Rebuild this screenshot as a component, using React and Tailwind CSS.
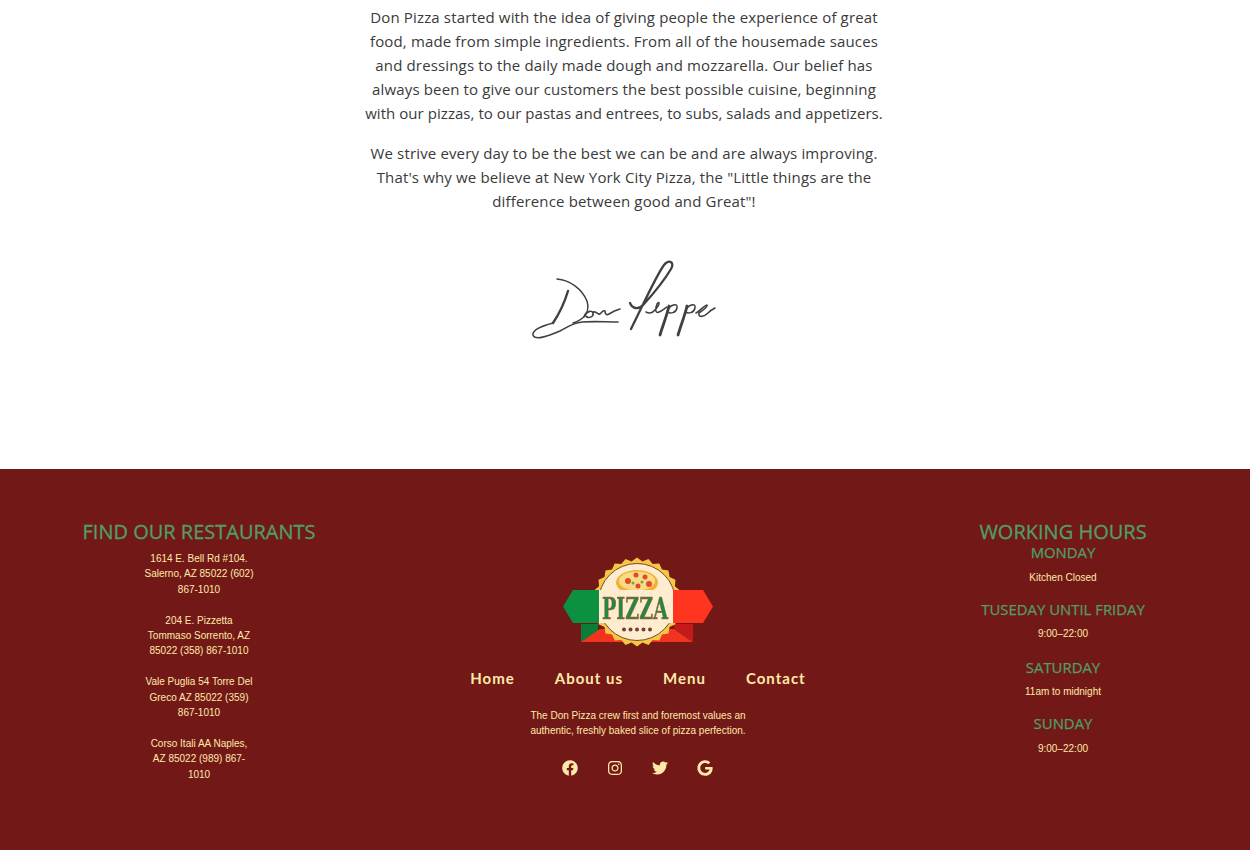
import React from "react";
import { FaFacebook, FaInstagram, FaTwitter, FaGoogle } from "react-icons/fa";

const serrated = () => {
  const pts = [];
  const n = 48;
  for (let i = 0; i < n; i++) {
    const a = (i / n) * Math.PI * 2;
    const r = i % 2 ? 41 : 44.5;
    pts.push(`${(75 + r * Math.cos(a)).toFixed(1)},${(45 + r * Math.sin(a)).toFixed(1)}`);
  }
  return pts.join(" ");
};

function Logo() {
  return (
    <svg width="152" height="92" viewBox="0 0 152 92" className="block blur-[0.3px]">
      <polygon points="19,67 36,67 36,85 19,85" fill="#0b7d38" />
      <polygon points="19,85 38,72 112,72 131,85" fill="#f0341f" />
      <polygon points="112,67 131,67 131,85 112,72" fill="#c41a1a" />
      <polygon points={serrated()} fill="#f6c745" />
      <circle cx="75" cy="45" r="38.500" fill="#fdeccf" stroke="#7a4a2a" strokeWidth="1" />
      <ellipse cx="75" cy="25.500" rx="21" ry="12.500" fill="#f2b135" />
      <ellipse cx="75" cy="24" rx="18" ry="9.500" fill="#f8dc84" />
      <circle cx="66" cy="24" r="3" fill="#e2492f" />
      <circle cx="74" cy="18" r="2.500" fill="#e2492f" />
      <circle cx="83" cy="20" r="2.500" fill="#e2492f" />
      <circle cx="76" cy="29" r="2.500" fill="#e2492f" />
      <circle cx="87" cy="27" r="3" fill="#e2492f" />
      <circle cx="71" cy="26" r="1.500" fill="#6aa84f" />
      <circle cx="80" cy="25" r="1.500" fill="#6aa84f" />
      <polygon points="11,33 37,33 37,66 11,66 1,49.500" fill="#0c9140" />
      <rect x="37" y="33" width="74" height="33" fill="#fdeccf" />
      <polygon points="111,33 141,33 151,49.500 141,66 111,66" fill="#ff3520" />
      <text x="73" y="62" textAnchor="middle" fontFamily="'DejaVu Serif', serif" fontWeight="700" fontSize="29" fill="#1c8a45" stroke="#e2492f" strokeWidth="0.5" textLength="66" lengthAdjust="spacingAndGlyphs">PIZZA</text>
      <g fill="#7a3b33">
        <circle cx="62" cy="72.500" r="2" /><circle cx="68.500" cy="72.500" r="2" /><circle cx="75" cy="72.500" r="2" /><circle cx="81.500" cy="72.500" r="2" /><circle cx="88" cy="72.500" r="2" />
      </g>
    </svg>
  );
}

function Signature() {
  return (
    <svg width="230" height="100" viewBox="0 0 230 100" fill="none" stroke="#404040" strokeLinecap="round" strokeLinejoin="round" className="block blur-[0.35px]">
      <path d="M47 28 C60 29 72 38 77 50 C80 60 75 68 63 72" strokeWidth="1.5" />
      <path d="M58 40 C55 50 49 63 43 72" strokeWidth="2.400" />
      <path d="M43 72 C32 75 22 79 23 84 C25 90 38 85 50 80 C58 76 62 72 72 71 C84 70 96 71 108 71" strokeWidth="1.600" />
      <path d="M74 66 C76 60 82 59 83 62 C84 66 78 68 76 65 M83 61 C87 60 88 64 90 63 C92 61 93 59 95 60 C95 62 96 65 99 63 C102 61 106 59 110 58" strokeWidth="1.600" />
      <path d="M120 52 C122 57 128 60 134 53 C144 42 155 28 161 18 C165 11 159 8 154 14 C146 25 135 50 121 78" strokeWidth="2.300" />
      <path d="M136 61 C141 64 145 60 148 55 C150 52 149 50 147 53 C145 57 145 63 149 61 C152 60 155 57 157 56" strokeWidth="1.500" />
      <path d="M159 55 C157 64 153 74 150 84" strokeWidth="2.800" />
      <path d="M158 58 C162 53 168 52 167 57 C166 62 160 63 158 61" strokeWidth="1.500" />
      <path d="M177 55 C175 64 171 74 168 84" strokeWidth="2.800" />
      <path d="M176 58 C180 53 186 52 185 57 C184 62 178 63 176 61" strokeWidth="1.500" />
      <path d="M186 62 C190 60 195 54 197 54 C198 56 192 60 189 62 C188 67 194 66 198 62 C200 60 203 58 205 57" strokeWidth="1.600" />
    </svg>
  );
}

function Day({ title, time, cls, timeCls }) {
  return (
    <div className={cls}>
      <h4 className="text-[14.9px] leading-[20px] text-[#519e66] [-webkit-text-stroke:0.25px_#519e66]">{title}</h4>
      <p className={`${timeCls} text-[10px] leading-[15px] text-[#ffe9a8] [font-family:'Liberation_Sans',sans-serif]`}>{time}</p>
    </div>
  );
}

export default function App() {
  return (
    <div className="h-[850px] overflow-hidden bg-white [font-family:'Open_Sans',sans-serif]">
      <main className="h-[469px] flex flex-col items-center pt-[5px]">
        <div className="w-[532px] mr-[2px] text-center text-[15px] tracking-[0.15px] leading-[24px] text-[#3a3a3a]">
          <p>Don Pizza started with the idea of giving people the experience of great food, made from simple ingredients. From all of the housemade sauces and dressings to the daily made dough and mozzarella. Our belief has always been to give our customers the best possible cuisine, beginning <span className="tracking-[0.05px]">with our pizzas, to our pastas and entrees, to subs, salads and appetizers.</span></p>
          <p className="mt-[16px]">We strive every day to be the best we can be and are always improving. That's why we believe at New York City Pizza, the "Little things are the difference between good and Great"!</p>
        </div>
        <div className="mt-[38px]"><Signature /></div>
      </main>
      <footer className="h-[381px] bg-[#721918] grid grid-cols-[398px_480px_370px] text-center">
        <section className="pt-[49px] flex flex-col items-center">
          <h3 className="text-[20px] leading-[28px] text-[#519e66] [-webkit-text-stroke:0.3px_#519e66] whitespace-nowrap">FIND OUR RESTAURANTS</h3>
          <div className="w-[111px] mt-[5px] text-[10px] leading-[15.4px] text-[#ffe9a8] [font-family:'Liberation_Sans',sans-serif]">
            <p>1614 E. Bell Rd #104. Salerno, AZ 85022 (602) 867-1010</p>
            <p className="mt-[15.4px]">204 E. Pizzetta Tommaso Sorrento, AZ 85022 (358) 867-1010</p>
            <p className="mt-[15.4px]">Vale Puglia 54 Torre Del Greco AZ 85022 (359) 867-1010</p>
            <p className="mt-[15.4px]">Corso Itali AA Naples, AZ 85022 (989) 867-1010</p>
          </div>
        </section>
        <section className="pt-[88px] flex flex-col items-center">
          <Logo />
          <nav className="mt-[19px] flex gap-[40px] text-[15px] leading-[20px] font-bold tracking-[1px] text-[#ffe9a8] [font-family:'Lato',sans-serif]">
            <a>Home</a><a>About us</a><a>Menu</a><a>Contact</a>
          </nav>
          <p className="mt-[20px] w-[230px] text-[10px] leading-[15px] text-[#ffe9a8] [font-family:'Liberation_Sans',sans-serif]">The Don Pizza crew first and foremost values an authentic, freshly baked slice of pizza perfection.</p>
          <div className="mt-[22px] -ml-[1px] flex gap-[29px] text-[16px] text-[#ffe9a8]">
            <FaFacebook /><FaInstagram /><FaTwitter /><FaGoogle />
          </div>
        </section>
        <section className="pt-[51px] flex flex-col items-center">
          <h3 className="text-[20px] leading-[24px] text-[#519e66] [-webkit-text-stroke:0.3px_#519e66] whitespace-nowrap">WORKING HOURS</h3>
          <Day title="MONDAY" time="Kitchen Closed" cls="-mt-[2px]" timeCls="mt-[8px]" />
          <Day title="TUSEDAY UNTIL FRIDAY" time="9:00–22:00" cls="mt-[14px]" timeCls="mt-[7px]" />
          <Day title="SATURDAY" time="11am to midnight" cls="mt-[16px]" timeCls="mt-[7px]" />
          <Day title="SUNDAY" time="9:00–22:00" cls="mt-[14px]" timeCls="mt-[8px]" />
        </section>
      </footer>
    </div>
  );
}
